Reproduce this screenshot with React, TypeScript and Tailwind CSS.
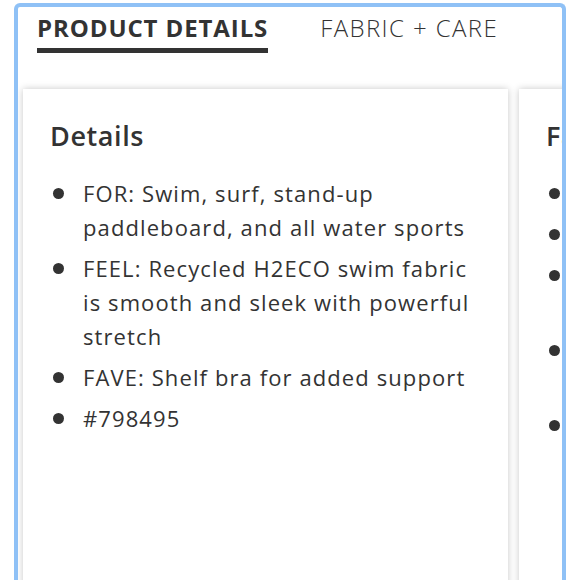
const details = [
  'FOR: Swim, surf, stand-up paddleboard, and all water sports',
  'FEEL: Recycled H2ECO swim fabric is smooth and sleek with powerful stretch',
  'FAVE: Shelf bra for added support',
  '#798495',
];

const fabric = [
  'Nylon/spandex blend',
  'Hand wash, line dry',
  'Chlorine resistant fabric holds its shape all season',
  'UPF 50+ sun protection blocks 98% of harmful rays',
  'Imported',
];

function Card({ title, items }: { title: string; items: string[] }) {
  return (
    <div className="w-[485px] shrink-0 bg-white shadow-[0_0_7px_rgba(0,0,0,0.22)] pl-[27px] pr-[28px] pt-[29px] pb-10 min-h-[520px]">
      <h2 className="text-[27px] leading-[36px] font-semibold text-[#333] tracking-[0.6px]">{title}</h2>
      <ul className="mt-[22px] flex flex-col gap-[7px]">
        {items.map((item) => (
          <li key={item} className="flex text-[22px] leading-[34px] text-[#333] tracking-[1.1px]">
            <span className="w-[33px] shrink-0 flex items-center h-[34px]">
              <span className="w-[11px] h-[11px] rounded-full bg-[#333] ml-[3px]" />
            </span>
            <span>{item}</span>
          </li>
        ))}
      </ul>
    </div>
  );
}

export default function App() {
  return (
    <div className="bg-white min-h-[580px] pt-[3px] px-[14px] font-['Open_Sans',sans-serif]">
      <div className="border-4 border-b-0 border-[#8fc1f6] rounded-t-[6px] h-[600px] overflow-hidden">
        <div className="flex items-start pl-[19px] pt-[5px] gap-[52px]">
          <div>
            <div className="text-[24px] leading-[32px] font-bold text-[#333] tracking-[0.9px]">PRODUCT DETAILS</div>
            <div className="h-[5px] bg-[#333] mt-[4px]" />
          </div>
          <div className="text-[24px] leading-[32px] font-light text-[#333] tracking-[1.4px]">FABRIC + CARE</div>
        </div>
        <div className="flex gap-[11px] pl-[5px] pt-[36px]">
          <Card title="Details" items={details} />
          <Card title="Fabric + Care" items={fabric} />
        </div>
      </div>
    </div>
  );
}
